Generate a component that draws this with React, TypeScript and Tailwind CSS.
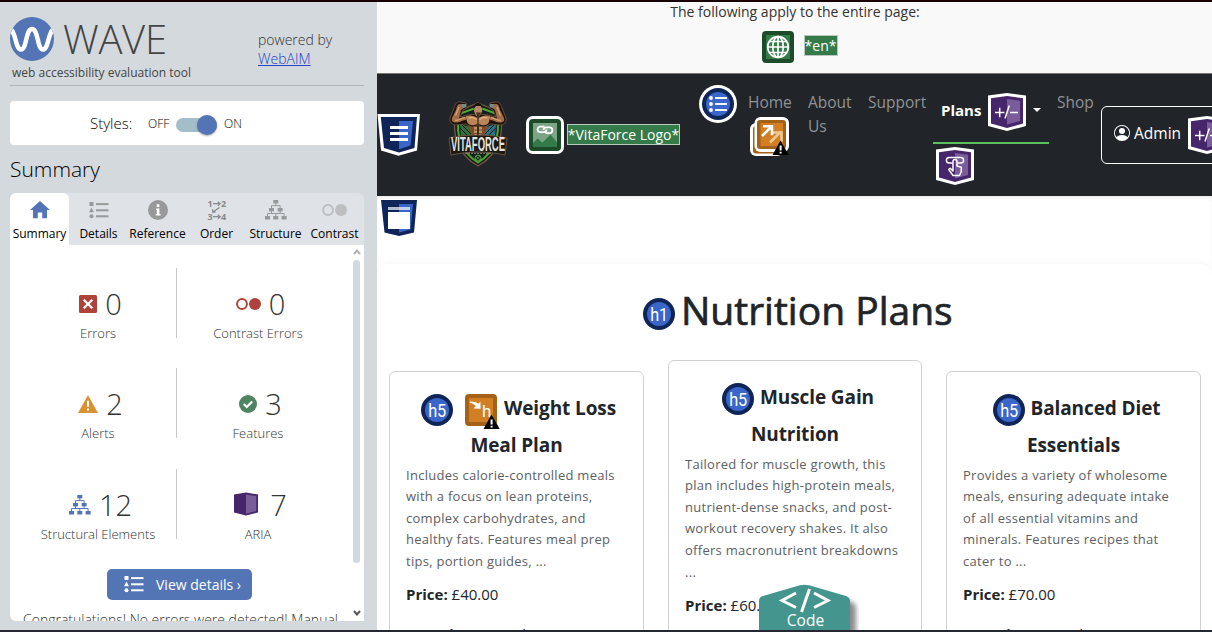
import React from "react";

type IconProps = { className?: string };

function WaveLogo() {
  return (
    <svg className="size-[44px] shrink-0" viewBox="0 0 44 44">
      <defs>
        <clipPath id="disc">
          <circle cx="22" cy="22" r="22" />
        </clipPath>
      </defs>
      <circle cx="22" cy="22" r="22" fill="#5375b5" />
      <path
        clipPath="url(#disc)"
        d="M-1 12C6 12 5 32.500 11 32.500C17 32.500 15.500 12 22 12C28.500 12 27 32.500 33 32.500C39 32.500 38 12 45 12"
        fill="none"
        stroke="#fff"
        strokeWidth="4.500"
      />
    </svg>
  );
}

function ListIcon({ className }: IconProps) {
  return (
    <svg className={className} viewBox="0 0 20 17" fill="currentColor">
      <rect x="0.5" y="0" width="4" height="4" />
      <path d="M2.5 5.6L5 10.2H0z" />
      <circle cx="2.5" cy="14.2" r="2" />
      <rect x="7" y="1.1" width="12.5" height="2" />
      <rect x="7" y="7.3" width="12.5" height="2" />
      <rect x="7" y="13.3" width="12.5" height="2" />
    </svg>
  );
}

function TreeIcon({ className }: IconProps) {
  return (
    <svg className={className} viewBox="0 0 22 20" fill="currentColor">
      <rect x="8.3" y="0" width="5" height="3.4" />
      <rect x="4" y="8" width="5" height="3.4" />
      <rect x="12.6" y="8" width="5" height="3.4" />
      <rect x="0" y="16" width="5" height="3.5" />
      <rect x="8.3" y="16" width="5" height="3.5" />
      <rect x="16.6" y="16" width="5" height="3.5" />
      <path
        d="M10.8 3v2.6M6.5 8V5.6h8.6V8M6.5 11v2.5M15.1 11v2.5M2.5 16v-2.5h16.6V16M10.8 16v-2.5"
        fill="none"
        stroke="currentColor"
        strokeWidth="1"
      />
    </svg>
  );
}

function HomeIcon() {
  return (
    <svg className="w-5 h-[18px]" viewBox="0 0 20 18">
      <path d="M10 0L0 9h3v8.3h4.8V11.500h4.400v5.800H17V9h3z" fill="#5375b5" />
    </svg>
  );
}

function InfoIcon() {
  return (
    <svg className="size-5" viewBox="0 0 20 20">
      <circle cx="10" cy="10" r="10" fill="#98999b" />
      <path d="M8.700 4.300h2.700v2.600H8.700zM8 8.500h3.400V14h1.200v1.500H7.700V14h1.100v-4H8z" fill="#fff" />
    </svg>
  );
}

function OrderIcon() {
  return (
    <svg className="w-5 h-[22px] overflow-visible" viewBox="0 0 20 22">
      <g fill="#88898b" fontFamily="Open Sans, sans-serif" fontWeight="700" fontSize="9">
        <text x="0.500" y="8">1</text>
        <text x="14" y="8">2</text>
        <text x="0.500" y="21">3</text>
        <text x="14" y="21">4</text>
      </g>
      <path
        d="M6 4.700h7M10.800 2.700l2.400 2-2.400 2M6 17.700h7M10.800 15.700l2.400 2-2.400 2M12.500 8.500L6 13M8.500 13.200H5.700V10.200"
        fill="none"
        stroke="#88898b"
        strokeWidth="1.200"
      />
    </svg>
  );
}

function TwoCircles({ className }: IconProps) {
  return (
    <svg className={className} viewBox="0 0 25 12">
      <circle cx="6" cy="6" r="4.900" fill="none" stroke="currentColor" strokeWidth="2" />
      <circle cx="19" cy="6" r="6" fill="currentColor" />
    </svg>
  );
}

function ErrorIcon() {
  return (
    <svg className="size-[18px]" viewBox="0 0 18 18">
      <rect width="18" height="18" rx="1.500" fill="#af423b" />
      <path d="M4.700 4.700l8.600 8.600M13.300 4.700l-8.600 8.600" stroke="#fff" strokeWidth="2.300" />
    </svg>
  );
}

function AlertIcon() {
  return (
    <svg className="w-5 h-[18px]" viewBox="0 0 20 18">
      <path d="M10 0L20 18H0z" fill="#d99232" />
      <path d="M9 5.800h2v6H9zM9 13.400h2v2.200H9z" fill="#fff" />
    </svg>
  );
}

function CheckIcon() {
  return (
    <svg className="size-[18px]" viewBox="0 0 18 18">
      <circle cx="9" cy="9" r="9" fill="#4f8462" />
      <path d="M4.800 9l3 3 5.400-5.600" fill="none" stroke="#fff" strokeWidth="2.200" />
    </svg>
  );
}

function AriaIcon() {
  return (
    <svg className="w-6 h-6" viewBox="0 0 24 24">
      <path d="M0 2.500L12 0.500 24 2.500V20.500L12 23.500 0 20.500z" fill="#46256b" />
      <path d="M12 2.500L22.300 4V19L12 21.800z" fill="#7a5c9a" />
    </svg>
  );
}

function NavShield() {
  return (
    <svg className="w-[43px] h-[42px] shrink-0" viewBox="0 0 43 42">
      <path d="M0.500 0H43L40 36.500 21.500 41.700 4 36.500z" fill="#fff" />
      <path d="M3.800 3H40L37.500 34 22 38.600 7 34z" fill="#0f2557" />
      <path d="M22 7H36L33.500 31.500 22 35.200z" fill="#3a66c9" />
      <path d="M13 12h18v3H13zM13 18h18v3H13zM13 24h18v3H13z" fill="#fff" />
    </svg>
  );
}

function MainShield() {
  return (
    <svg className="w-[36px] h-[36px]" viewBox="0 0 36 36">
      <path d="M0 0H36L33 32.500 18 36 3.500 32.500z" fill="#0f2557" />
      <path d="M18 4H32L29.500 29.500 18 32.500z" fill="#3a66c9" />
      <path d="M7 7h11v3H7z" fill="#b5bdd0" />
      <path d="M18 7h11v3H18z" fill="#c4d1f0" />
      <path d="M7 12h22v17H7z" fill="#fff" />
    </svg>
  );
}

function HeadingBadge({ label, className = "" }: { label: string; className?: string }) {
  return (
    <svg className={"size-8 shrink-0 " + className} viewBox="0 0 32 32">
      <circle cx="16" cy="16" r="16" fill="#0f2557" />
      <circle cx="16" cy="16" r="12" fill="#3a66c9" />
      <text
        x="16.200"
        y="23"
        textAnchor="middle"
        fill="#fff"
        fontFamily="Roboto, sans-serif"
        fontSize="18.500"
        fontWeight="400"
        textLength="18"
        lengthAdjust="spacingAndGlyphs"
      >
        {label}
      </text>
    </svg>
  );
}

function WarnTriangle() {
  return (
    <>
      <path d="M8 0L16.200 14.500H0z" fill="#000" />
      <path d="M7.100 5h2v5h-2zM7.100 11.200h2v1.800h-2z" fill="#fff" />
    </>
  );
}

function SkippedHeadingIcon() {
  return (
    <svg className="w-[35px] h-[35px] shrink-0" viewBox="0 0 35 35">
      <rect width="32" height="32" rx="4" fill="#a36217" />
      <rect x="4" y="4" width="24" height="24" fill="#d17f22" />
      <path d="M4.800 7.600C9 7.200 12 8.500 13.200 9.700L15.400 7.700 15.600 14.800 8.500 14.500 10.700 12.300C9.500 10.500 7.500 9.200 4.800 8.700z" fill="#fff" />
      <text x="17" y="22.600" fill="#fff" fontFamily="Roboto, sans-serif" fontSize="17" fontWeight="400">
        h
      </text>
      <g transform="translate(18.500 20.500)">
        <WarnTriangle />
      </g>
    </svg>
  );
}

function GlobeIcon() {
  return (
    <svg className="size-8" viewBox="0 0 32 32">
      <rect width="32" height="32" rx="4" fill="#1b4b29" />
      <rect x="4" y="4" width="24" height="24" fill="#357a49" />
      <g fill="none" stroke="#fff" strokeWidth="1.700">
        <circle cx="16" cy="16" r="10.300" />
        <ellipse cx="16" cy="16" rx="5.200" ry="10.300" />
        <path d="M16 5.700v20.600M5.700 16h20.600M7.300 10.500h17.400M7.300 21.500h17.400" />
      </g>
    </svg>
  );
}

function LinkedImageIcon() {
  return (
    <svg className="size-[38px] shrink-0" viewBox="0 0 38 38">
      <rect width="38" height="38" rx="7" fill="#fff" />
      <rect x="3" y="3" width="32" height="32" rx="4" fill="#1b4b29" />
      <rect x="7" y="7" width="24" height="24" fill="#7ca587" />
      <path d="M7 27l4.500-4.500 5 4 8-8 6.500 8V31H7z" fill="#357a49" />
      <path
        d="M18.500 10.600h-4a2.900 2.900 0 0 0-2.900 2.900c0 1.600 1.300 2.700 2.900 2.700h3c2 0 3-1.300 3-2.700M19.500 17.200h4a2.900 2.900 0 0 0 2.900-2.900c0-1.600-1.300-2.900-2.900-2.900h-3c-2 0-3 1.300-3 2.700"
        fill="none"
        stroke="#fff"
        strokeWidth="1.800"
      />
    </svg>
  );
}

function UnorderedListBadge() {
  return (
    <svg className="size-[38px] shrink-0" viewBox="0 0 38 38">
      <circle cx="19" cy="19" r="19" fill="#fff" />
      <circle cx="19" cy="19" r="16" fill="#0f2557" />
      <circle cx="19" cy="19" r="12" fill="#3a66c9" />
      <g fill="#fff">
        <circle cx="12" cy="13" r="1.900" />
        <circle cx="12" cy="19" r="1.900" />
        <circle cx="12" cy="25" r="1.900" />
        <rect x="16" y="12" width="12" height="2" rx="0.700" />
        <rect x="16" y="18" width="12" height="2" rx="0.700" />
        <rect x="16" y="24" width="12" height="2" rx="0.700" />
      </g>
    </svg>
  );
}

function RedundantLinkIcon() {
  return (
    <svg className="w-[39px] h-[39px]" viewBox="0 0 39 39">
      <rect x="0" y="6" width="33" height="33" rx="6" fill="#fff" />
      <rect x="3" y="9" width="29" height="27.500" rx="3" fill="#a36217" />
      <rect x="4.500" y="0" width="34.500" height="35" rx="6" fill="#fff" />
      <rect x="7" y="3" width="29" height="29" rx="3" fill="#a36217" />
      <rect x="10.500" y="6" width="22.500" height="23" fill="#d17f22" />
      <path d="M20 25.500L31 14.500M22.500 15.500h9v9" fill="none" stroke="#efc795" strokeWidth="2.600" />
      <path d="M12 19L22 9M13 9.300h9v9" fill="none" stroke="#fff" strokeWidth="2.600" />
      <g transform="translate(22.500 23.500)">
        <WarnTriangle />
      </g>
    </svg>
  );
}

function AriaBadge({ children }: { children: React.ReactNode }) {
  return (
    <svg className="size-[38px] shrink-0" viewBox="0 0 38 38">
      <path d="M0 2.500L19 0 38 2.500V33L19 38 0 33z" fill="#fff" />
      <path d="M3 5.200L19 3 35 5.200V30.500L19 35 3 30.500z" fill="#46256b" />
      <path d="M19 6L32 7.800V28L19 31.500z" fill="#7a5c9a" />
      {children}
    </svg>
  );
}

function ExpandedBadge() {
  return (
    <AriaBadge>
      <path d="M7 19.500h9.500M11.700 14.700v9.500M22 19.500h8M21.300 12.500L17 25.500" stroke="#fff" strokeWidth="1.500" fill="none" />
    </AriaBadge>
  );
}

function PopupBadge() {
  return (
    <AriaBadge>
      <g fill="none" stroke="#fff" strokeWidth="1.500" strokeLinejoin="round">
        <path d="M16.500 16h-3.300a2.800 2.800 0 0 1 0-5.600h11.600a2.800 2.800 0 0 1 0 5.600h-3.300" />
        <path d="M17 24V14.500a2 2 0 0 1 4 0V19l4.300 1.200V24.500L23.500 28.500H17L12.700 22.500l1.500-1.200z" />
      </g>
    </AriaBadge>
  );
}

function LogoArm() {
  return (
    <>
      <path
        d="M13 1C9 0 7 3 6 7L2 17C1 21 4 24 8 24C12 24 15 23 18 23L24 27L29 25V13L20 14L12 16L15 9L19 7L18 2z"
        fill="#1d120c"
        stroke="#76593f"
        strokeWidth="0.800"
      />
      <path d="M12 3C9 3 9 6 8 9L4 17C3 21 6 22 9 21.500C13 21 15 19 18 19L20 15L11 17.500L13 9L17 6V3.500z" fill="#a26d46" />
      <path d="M11 6L7.500 14.500" stroke="#d9a677" strokeWidth="1.300" />
      <path d="M7 19.500C10 19.500 13 17.500 17 16.500" stroke="#cf9a6c" strokeWidth="1.300" fill="none" />
      <path d="M14 3h4v3.500h-4z" fill="#6f8f8b" />
      <path d="M18 15.500C22 13.500 26 15 29.300 17V22.500C26 25.500 21 24.500 19 21z" fill="#bd8557" />
      <path d="M20.500 17C24 15.500 26 16.500 28.500 18.500" stroke="#e2b283" strokeWidth="1.200" fill="none" />
      <path d="M20 24L24 25.500L29.300 24.500V36H24z" fill="#7c4c2c" />
      <path d="M26 26h3v2.600h-3zM26 29.500h3V32h-3zM26.300 33h2.700v2h-2.700z" fill="#c38e5f" />
    </>
  );
}

function VitaForceLogo() {
  return (
    <svg className="w-[60px] h-[66px] shrink-0" viewBox="0 0 60 66">
      <path d="M30 2L52 11C56 30 53 52 30 65C7 52 4 30 8 11z" fill="#171d1b" stroke="#75593f" strokeWidth="1.200" />
      <path d="M30 6L49 13C52 31 49 50 30 61.500C11 50 8 31 11 13z" fill="#15211e" stroke="#4fa834" strokeWidth="2" />
      <path d="M12 23L22 26L24 36H13z" fill="#2f7139" />
      <path d="M48 23L38 26L36 36H47z" fill="#2a7284" />
      <path d="M12 27l9 9M14 24l9 9M48 27l-9 9M46 24l-9 9" stroke="#101719" strokeWidth="1" />
      <LogoArm />
      <g transform="translate(60 0) scale(-1 1)">
        <LogoArm />
      </g>
      <path d="M26.500 5C26.500 2 34 2 34 6V11L31 15H28L26 10z" fill="#b98964" />
      <path d="M25.500 8C24.500 0 35.500 0 34.500 8L32.500 5H28z" fill="#141414" />
      <path d="M28 11.500h5L31 15h-2z" fill="#4c301f" />
      <path d="M1 37C20 33 40 33 59 37L57 54C38 50 22 50 3 54z" fill="#1b1916" stroke="#735740" strokeWidth="0.900" />
      <text
        x="30"
        y="50"
        textAnchor="middle"
        fill="#e4e3df"
        fontFamily="Liberation Sans, sans-serif"
        fontSize="20"
        fontWeight="700"
        textLength="54"
        lengthAdjust="spacingAndGlyphs"
      >
        VITAFORCE
      </text>
      <path d="M17 52.300h26" stroke="#8d8473" strokeWidth="1" strokeDasharray="2 1" />
      <circle cx="30" cy="57" r="3" fill="none" stroke="#4d9e3b" strokeWidth="1" />
      <path d="M28 55l4 4M32 55l-4 4" stroke="#4d9e3b" strokeWidth="0.800" />
    </svg>
  );
}

function UserIcon() {
  return (
    <svg className="size-4 shrink-0" viewBox="0 0 16 16" fill="#fff">
      <path d="M11 6a3 3 0 1 1-6 0 3 3 0 0 1 6 0" />
      <path
        fillRule="evenodd"
        d="M0 8a8 8 0 1 1 16 0A8 8 0 0 1 0 8m8-7a7 7 0 0 0-5.468 11.370C3.242 11.226 4.805 10 8 10s4.757 1.225 5.468 2.370A7 7 0 0 0 8 1"
      />
    </svg>
  );
}

function Tab({ label, active = false, children }: { label: string; active?: boolean; children: React.ReactNode }) {
  return (
    <div className={"flex w-[59px] flex-col items-center rounded-t-md " + (active ? "bg-white" : "")}>
      <div className="mt-1.5 flex h-[22px] items-center justify-center">{children}</div>
      <div className="mt-1 whitespace-nowrap text-[12px] leading-[17px] text-black">{label}</div>
    </div>
  );
}

function Stat({ icon, value, label }: { icon: React.ReactNode; value: string; label: string }) {
  return (
    <div className="flex flex-1 flex-col items-center">
      <div className="mt-[16px] flex h-10 shrink-0 items-center gap-[8px] pl-[5px] text-[29px] font-light leading-[40px] text-[#333]">
        {icon}
        <span>{value}</span>
      </div>
      <div className="whitespace-nowrap text-[13px] font-light leading-[18px] text-[#333]">{label}</div>
    </div>
  );
}

function StatRow({ children, className }: { children: [React.ReactNode, React.ReactNode]; className: string }) {
  return (
    <div className={"flex h-[70px] w-[343px] " + className}>
      <div className="flex w-[166px] shrink-0 pl-[10px]">{children[0]}</div>
      <div className="w-px shrink-0 bg-[#c8c8c8]" />
      <div className="flex w-[162px] shrink-0">{children[1]}</div>
    </div>
  );
}

function Sidebar() {
  return (
    <aside className="flex w-[377px] shrink-0 flex-col bg-[#d3d9dd] pl-[10px]">
      <header className="flex h-[84px] w-[354px] border-b border-[#adb5ba]">
        <div className="w-[248px] pt-[15px]">
          <div className="flex h-[44px] items-center">
            <WaveLogo />
            <span className="ml-[9px] text-[40px] font-light leading-[42px] tracking-[-0.300px] text-[#444]">WAVE</span>
          </div>
          <div className="ml-[2px] mt-[3px] whitespace-nowrap text-[12px] leading-[17px] text-[#444]">web accessibility evaluation tool</div>
        </div>
        <div className="pt-[28px] text-[14px] font-light leading-[19px] text-[#333]">
          <div>powered by</div>
          <a className="text-[#2344c8] underline">WebAIM</a>
        </div>
      </header>

      <div className="mt-[15px] flex h-[44px] w-[354px] items-center rounded-[4px] bg-white pl-[80px] text-black">
        <span className="mt-px w-[58px] text-[15px] font-light">Styles:</span>
        <span className="mt-[2px] w-[28px] text-[12px] font-light">OFF</span>
        <div className="mt-[4px] flex h-[14px] w-[41px] items-center justify-end rounded-full bg-[#a4bec9]">
          <div className="size-5 rounded-full bg-[#5375b5] shadow-[0_1px_2px_rgba(0,0,0,.35)]" />
        </div>
        <span className="ml-[7px] mt-[2px] text-[12px] font-light">ON</span>
      </div>

      <h2 className="mt-[9px] h-[39px] text-[21px] font-light leading-[31px] text-black">Summary</h2>

      <div className="flex h-[52px] w-[354px] rounded-t-md bg-[#dfe2e7]">
        <Tab label="Summary" active><HomeIcon /></Tab>
        <Tab label="Details"><ListIcon className="h-[17px] w-5 text-[#98999b]" /></Tab>
        <Tab label="Reference"><InfoIcon /></Tab>
        <Tab label="Order"><OrderIcon /></Tab>
        <Tab label="Structure"><TreeIcon className="h-5 w-[22px] text-[#98999b]" /></Tab>
        <Tab label="Contrast"><TwoCircles className="h-3 w-[25px] text-[#bdbec0]" /></Tab>
      </div>

      <div className="flex h-[376px] w-[354px] overflow-hidden rounded-bl-md bg-white">
        <div className="w-[343px] overflow-hidden">
          <StatRow className="mt-[23px]">
            <Stat icon={<ErrorIcon />} value="0" label="Errors" />
            <Stat icon={<TwoCircles className="h-3 w-[25px] text-[#af423b]" />} value="0" label="Contrast Errors" />
          </StatRow>
          <StatRow className="mt-[30px]">
            <Stat icon={<AlertIcon />} value="2" label="Alerts" />
            <Stat icon={<CheckIcon />} value="3" label="Features" />
          </StatRow>
          <StatRow className="mt-[31px]">
            <Stat icon={<TreeIcon className="h-5 w-[22px] text-[#5375b5]" />} value="12" label="Structural Elements" />
            <Stat icon={<span className="-mt-[2px] mr-[4px]"><AriaIcon /></span>} value="7" label="ARIA" />
          </StatRow>
          <button className="ml-[97px] mt-[30px] flex h-[31px] w-[145px] items-center rounded-[5px] bg-[#5375b5] pl-[17px] text-[14px] text-white">
            <ListIcon className="h-[17px] w-5" />
            <span className="-mt-px ml-[12px] whitespace-nowrap">View details ›</span>
          </button>
          <p className="ml-[13px] mt-[10px] whitespace-nowrap text-[14px] font-light leading-[20px] text-[#333]">
            Congratulations! No errors were detected! Manual
          </p>
        </div>
        <div className="flex w-[7px] flex-col items-center">
          <svg className="mt-[3px] h-2 w-2 shrink-0" viewBox="0 0 8 8"><path d="M1 6l3-3.500L7 6" fill="none" stroke="#b0b0b0" strokeWidth="2" /></svg>
          <div className="mt-1 h-[303px] w-[7px] shrink-0 rounded-[3px] bg-[#d1d9e0]" />
          <svg className="mt-[46px] h-2 w-2 shrink-0" viewBox="0 0 8 8"><path d="M1 2l3 3.500L7 2" fill="none" stroke="#555" strokeWidth="2" /></svg>
        </div>
      </div>
    </aside>
  );
}

function NavBar() {
  return (
    <nav className="flex h-[122px] w-full shrink-0 overflow-hidden bg-[#212529] text-[15.500px] leading-[24px] text-[#909294]">
      <div className="mt-[40px] w-[71px] shrink-0"><NavShield /></div>
      <div className="mt-[27px] w-[78px] shrink-0"><VitaForceLogo /></div>
      <div className="mt-[42px] flex w-[173px] shrink-0 items-start">
        <LinkedImageIcon />
        <span className="ml-[3px] mt-[8px] flex h-[21px] w-[113px] shrink-0 items-center justify-center whitespace-nowrap border border-[#b9c9bd] bg-[#357a49] text-[14px] text-white">*VitaForce Logo*</span>
      </div>
      <div className="mt-[11px] w-[49px] shrink-0"><UnorderedListBadge /></div>
      <div className="mt-[16px] w-[60px] shrink-0">
        <div>Home</div>
        <div className="ml-[2px] mt-[3px]"><RedundantLinkIcon /></div>
      </div>
      <div className="mt-[16px] w-[60px] shrink-0 pr-[12px]">About Us</div>
      <div className="mt-[16px] w-[65px] shrink-0">Support</div>
      <div className="w-[124px] shrink-0">
        <div className="mt-[19px] flex h-[51px] w-[116px] border-b-2 border-[#5dbf5b] pl-[8px]">
          <span className="w-[47px] pt-[5px] text-[15px] font-bold text-white">Plans</span>
          <ExpandedBadge />
          <svg className="ml-[7px] mt-[15px] h-[4px] w-2" viewBox="0 0 8 4"><path d="M0 0h8L4 4z" fill="#fff" /></svg>
        </div>
        <div className="ml-[3px] mt-[3px]"><PopupBadge /></div>
      </div>
      <div className="mt-[16px] w-[44px] shrink-0">Shop</div>
      <div className="mt-[32px] flex h-[58px] w-[150px] shrink-0 items-center rounded-[6px] border border-white pl-[12px] text-white">
        <span className="-mt-[5px]"><UserIcon /></span>
        <span className="-mt-[4px] ml-[4px] w-[54px] shrink-0">Admin</span>
        <ExpandedBadge />
      </div>
    </nav>
  );
}

type Plan = {
  width: string;
  first: React.ReactNode;
  second: string;
  lines: string[];
  price: React.ReactNode;
};

function PlanCard({ width, first, second, lines, price }: Plan) {
  return (
    <article className={"h-[400px] shrink-0 rounded-[6px] border border-[#d0d1d2] bg-white px-[16px] " + width}>
      <h5 className="mt-[18px] text-[19px] font-bold leading-[37px] tracking-[-0.100px] text-[#212529]">
        <span className="flex h-[37px] items-center justify-center whitespace-nowrap pl-[6px]">{first}</span>
        <span className="block text-center">{second}</span>
      </h5>
      <div className="mt-[0.600px] whitespace-nowrap text-[13px] leading-[21.600px] tracking-[0.280px] text-[#5c6064]">
        {lines.map((line) => (
          <div key={line}>{line}</div>
        ))}
      </div>
      <div className="mt-[9.400px] text-[15px] leading-[24px] text-[#212529]"><b>Price:</b> {price}</div>
      <div className="mt-[16px] text-[15px] leading-[24px] text-[#212529]"><b>Duration:</b> 4 weeks</div>
    </article>
  );
}

function CodeTab() {
  return (
    <svg className="absolute bottom-0 left-[382px] h-[46px] w-[100px]" viewBox="0 0 100 46">
      <defs>
        <filter id="soft" x="-20%" y="-20%" width="140%" height="140%"><feGaussianBlur stdDeviation="2.500" /></filter>
      </defs>
      <path d="M9 50V20Q9 17 12 16L49 8 90 17Q97 19 97 23V50z" fill="#000" opacity=".45" filter="url(#soft)" />
      <path d="M0 48V17Q0 13 4 12L41 1.200Q45.500 0.500 50 1.200L87 12Q91 13.500 91 17V48z" fill="#43958d" />
      <path d="M37 9L23 16.500 37 23.500M55 9l14 7.500L55 23.500M50.500 5L42.500 28" fill="none" stroke="#fff" strokeWidth="3" />
      <text x="46.500" y="42" textAnchor="middle" fill="#fff" fontFamily="Open Sans, sans-serif" fontSize="15.500">Code</text>
    </svg>
  );
}

export default function App() {
  return (
    <div className="flex h-[632px] w-[1212px] overflow-hidden border-t-2 border-b-2 border-t-[#180206] border-b-[#252733] bg-white font-['Open_Sans',sans-serif]">
      <Sidebar />
      <main className="relative flex w-[835px] flex-col overflow-hidden bg-white">
        <div className="flex h-[72px] shrink-0 flex-col items-center border-b border-[#777] bg-[#f9f9f9] text-[#333]">
          <p className="ml-[1px] h-[29px] text-[14px] leading-[20px]">The following apply to the entire page:</p>
          <div className="ml-[10px] flex items-center gap-[10px]">
            <GlobeIcon />
            <span className="-mt-[3px] flex h-[21px] w-[34px] items-center justify-center border border-[#b9c9bd] bg-[#357a49] text-[14px] text-white">*en*</span>
          </div>
        </div>
        <NavBar />
        <div className="h-[68px] shrink-0 pl-[4px] pt-[4px] shadow-[inset_0_3px_4px_-2px_rgba(0,0,0,.12)]"><MainShield /></div>
        <section className="flex h-[500px] shrink-0 flex-col rounded-t-[12px] shadow-[0_0_10px_rgba(0,0,0,.05)]">
          <h1 className="ml-[266px] mt-[19px] flex h-[54px] items-center text-[39px] font-medium leading-[54px] text-[#212529]">
            <HeadingBadge label="h1" className="mt-[8px]" />
            <span className="ml-[6px] whitespace-nowrap [-webkit-text-stroke:0.700px_#212529]">Nutrition Plans</span>
          </h1>
          <div className="ml-[12px] mt-[23px] flex w-[812px] items-start justify-between">
            <div className="mt-[11px]">
              <PlanCard
                width="w-[255px]"
                first={<><HeadingBadge label="h5" className="-ml-[2px] mt-[3px]" /><span className="ml-[12px] mt-[6px]"><SkippedHeadingIcon /></span><span className="ml-[4px]">Weight Loss</span></>}
                second="Meal Plan"
                lines={["Includes calorie-controlled meals", "with a focus on lean proteins,", "complex carbohydrates, and", "healthy fats. Features meal prep", "tips, portion guides, ..."]}
                price="£40.00"
              />
            </div>
            <PlanCard
              width="w-[254px]"
              first={<><HeadingBadge label="h5" className="mt-[3px]" /><span className="ml-[6px]">Muscle Gain</span></>}
              second="Nutrition"
              lines={["Tailored for muscle growth, this", "plan includes high-protein meals,", "nutrient-dense snacks, and post-", "workout recovery shakes. It also", "offers macronutrient breakdowns", "..."]}
              price="£60.00"
            />
            <div className="mt-[11px]">
              <PlanCard
                width="w-[255px]"
                first={<><HeadingBadge label="h5" className="mt-[3px]" /><span className="ml-[6px]">Balanced Diet</span></>}
                second="Essentials"
                lines={["Provides a variety of wholesome", "meals, ensuring adequate intake", "of all essential vitamins and", "minerals. Features recipes that", "cater to ..."]}
                price="£70.00"
              />
            </div>
          </div>
        </section>
        <CodeTab />
      </main>
    </div>
  );
}
